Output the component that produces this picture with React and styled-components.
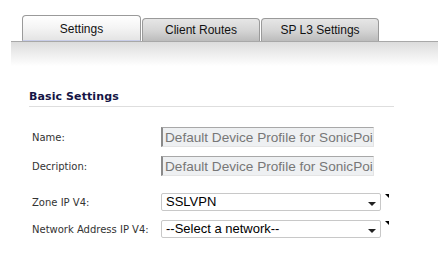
import React from 'react';
import styled, { createGlobalStyle } from 'styled-components';

const GlobalStyle = createGlobalStyle`
  html, body {
    margin: 0;
    padding: 0;
    background: #fff;
  }
  body {
    font-family: "Liberation Sans", Arial, sans-serif;
  }
`;

const Page = styled.div`
  width: 438px;
  height: 279px;
  overflow: hidden;
  padding-left: 11px;
  box-sizing: border-box;
`;

const TabBar = styled.div`
  display: flex;
  align-items: flex-end;
  gap: 1px;
  height: 41px;
  padding-left: 11px;
`;

const Tab = styled.div`
  width: ${p => (p.active ? 119 : 118)}px;
  height: ${p => (p.active ? 26 : 23)}px;
  box-sizing: border-box;
  border: 1px solid #9a9a9a;
  border-bottom: ${p => (p.active ? '1px solid #c8cde8' : 'none')};
  border-radius: 4px 4px 0 0;
  background: ${p =>
    p.active
      ? 'linear-gradient(#ffffff 0%, #f4f4f4 50%, #e4e4e4 100%)'
      : 'linear-gradient(#e6e6e6 0%, #d6d6d6 50%, #bcbcbc 100%)'};
  display: flex;
  align-items: center;
  justify-content: center;
  font-size: 12px;
  color: #111;
  padding-top: ${p => (p.active ? 1 : 0)}px;
`;

const Panel = styled.div`
  border-top: 1px solid #a8a8a8;
  background: linear-gradient(#dcdcdc 0px, #ffffff 24px, #ffffff 100%);
  padding: 48px 0 0 18px;
`;

const Section = styled.div`
  width: 365px;
`;

const SectionTitle = styled.div`
  font-family: "DejaVu Sans", Verdana, sans-serif;
  font-weight: bold;
  font-size: 11px;
  color: #151545;
  padding-bottom: 3px;
  border-bottom: 1px solid #dedede;
  letter-spacing: 0.1px;
`;

const Rows = styled.div`
  display: flex;
  flex-direction: column;
  padding: ${p => p.top}px 0 0 3px;
  gap: ${p => p.gap}px;
`;

const Row = styled.div`
  display: flex;
  align-items: center;
`;

const Label = styled.div`
  width: 129px;
  font-family: "DejaVu Sans", Tahoma, sans-serif;
  font-size: 10px;
  color: #333;
`;

const TextBox = styled.input`
  width: 213px;
  height: 20px;
  box-sizing: border-box;
  margin: 0;
  border-left: 2px solid #8a8a8a;
  border-top: 1px solid #a8a8a8;
  border-right: 1px solid #e4e4e4;
  border-bottom: 1px solid #e4e4e4;
  background: #eef0f2;
  font-family: "Liberation Sans", Arial, sans-serif;
  font-size: 13.6px;
  color: #777;
  padding: 0 0 0 2px;
  outline: none;
`;

const SelectWrap = styled.div`
  position: relative;
`;

const Select = styled.div`
  width: 220px;
  height: 18px;
  box-sizing: border-box;
  border: 1px solid #c8c8c8;
  border-radius: 2px;
  background: #fff;
  font-size: 13px;
  color: #000;
  padding-left: 4px;
  line-height: 16px;
  display: flex;
  align-items: center;
  justify-content: space-between;
`;

const Arrow = styled.span`
  width: 0;
  height: 0;
  border-left: 4px solid transparent;
  border-right: 4px solid transparent;
  border-top: 4px solid #222;
  margin: 3px 4px 0 0;
`;

const Corner = styled.span`
  position: absolute;
  left: 224px;
  top: 1px;
  width: 0;
  height: 0;
  border-left: 4px solid transparent;
  border-top: 4px solid #000;
`;

const fields = [
  { label: 'Name:', value: 'Default Device Profile for SonicPoint' },
  { label: 'Decription:', value: 'Default Device Profile for SonicPoint' },
];

const selects = [
  { label: 'Zone IP V4:', value: 'SSLVPN' },
  { label: 'Network Address IP V4:', value: '--Select a network--' },
];

export default function App() {
  return (
    <Page>
      <GlobalStyle />
      <TabBar>
        <Tab active>Settings</Tab>
        <Tab>Client Routes</Tab>
        <Tab>SP L3 Settings</Tab>
      </TabBar>
      <Panel>
        <Section>
          <SectionTitle>Basic Settings</SectionTitle>
          <Rows top={20} gap={9}>
            {fields.map(f => (
              <Row key={f.label}>
                <Label>{f.label}</Label>
                <TextBox type="text" value={f.value} readOnly />
              </Row>
            ))}
          </Rows>
          <Rows top={17} gap={9}>
            {selects.map(s => (
              <Row key={s.label}>
                <Label>{s.label}</Label>
                <SelectWrap>
                  <Select>
                    <span>{s.value}</span>
                    <Arrow />
                  </Select>
                  <Corner />
                </SelectWrap>
              </Row>
            ))}
          </Rows>
        </Section>
      </Panel>
    </Page>
  );
}
